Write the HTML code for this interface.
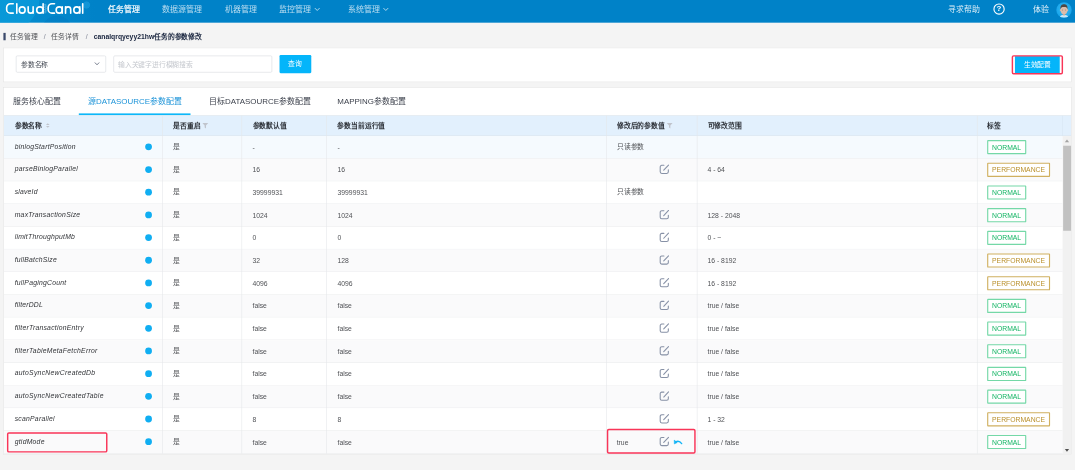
<!DOCTYPE html>
<html lang="zh-CN">
<head>
<meta charset="utf-8">
<title>CloudCanal</title>
<style>
html,body{margin:0;padding:0;background:#fff;overflow:hidden;}
body{width:1080px;height:470px;position:relative;font-family:"Liberation Sans",sans-serif;}
#page{position:absolute;left:0;top:0;width:1895.94px;height:828.92px;background:#f4f4f4;transform:scale(0.567);transform-origin:0 0;overflow:hidden;font-size:12px;color:#515a6e;filter:blur(0.55px);}
#page div,#page svg.a{position:absolute;}
#page svg{overflow:visible;display:block;}
.t{white-space:nowrap;font-size:12px;}
.n14{font-size:14px;}
</style>
</head>
<body>
<div id="page">
<div style="left:0.0px;top:0.0px;width:1895.94px;height:39.68px;background:radial-gradient(circle at 152.56px 8.82px,rgba(40,170,232,.45) 0,rgba(40,170,232,.45) 5.64px,transparent 6.88px),radial-gradient(circle at 100.53px 54.67px,rgba(0,105,180,.22) 0,rgba(0,105,180,.22) 26.46px,transparent 27.87px),radial-gradient(circle at 10.58px -3.53px,rgba(12,160,222,.6) 0,rgba(12,160,222,.6) 58.2px,transparent 59.96px),linear-gradient(90deg,#058dcf 0,#0388cc 88.18px,#0082c8 167.55px,#0082c8 100%);"></div>
<svg class="a" style="left:0;top:0" width="169.31" height="42.33" viewBox="0 0 96 24" fill="none" stroke="#fff" stroke-width="1.6" stroke-linecap="round" stroke-linejoin="round">
<path d="M13.2 3.8H10.4A3.75 3.75 0 0 0 6.65 7.55V9.4A3.75 3.75 0 0 0 10.4 13.15H13.2"/>
<path d="M16.8 3.8V13.15"/>
<ellipse cx="22.2" cy="10" rx="2.93" ry="3.15"/>
<path d="M28.17 6.85V10.65A2.48 2.48 0 0 0 33.13 10.65V6.85M33.13 6.85V13.15"/>
<ellipse cx="39.9" cy="10" rx="3.2" ry="3.15"/>
<path d="M43.1 3.8V13.15"/>
<path d="M44.95 4.3V13" stroke-width="0.9" stroke-dasharray="0.01 1.7" opacity=".7"/><path d="M45.95 5.1V12.6" stroke-width="0.9" stroke-dasharray="0.01 1.7" opacity=".6"/>
<path d="M54.5 3.8H51.95A3.75 3.75 0 0 0 48.2 7.55V9.4A3.75 3.75 0 0 0 51.95 13.15H54.5"/>
<ellipse cx="59.2" cy="10" rx="3.05" ry="3.15"/>
<path d="M62.25 6.85V13.15"/>
<path d="M65.55 13.15V6.85M65.55 9.45A2.575 2.575 0 0 1 70.7 9.45V13.15"/>
<ellipse cx="76.8" cy="10" rx="3.0" ry="3.15"/>
<path d="M79.8 6.85V13.15"/>
<path d="M82.7 3.8V13.15"/>
</svg>
<div class="t n14" style="left:190.48px;top:6.05px;line-height:20px;color:#fff;-webkit-text-stroke:0.35px #fff;">任务管理</div>
<div class="t n14" style="left:285.71px;top:6.05px;line-height:20px;color:rgba(255,255,255,.72);">数据源管理</div>
<div class="t n14" style="left:396.3px;top:6.05px;line-height:20px;color:rgba(255,255,255,.72);">机器管理</div>
<div class="t n14" style="left:491.53px;top:6.05px;line-height:20px;color:rgba(255,255,255,.72);">监控管理</div>
<div class="t n14" style="left:613.76px;top:6.05px;line-height:20px;color:rgba(255,255,255,.72);">系统管理</div>
<svg class="a" style="left:553.62px;top:12.7px" width="10.93" height="7.23" viewBox="-1 -1 6.2000000000000455 4.100000000000001" fill="none" stroke="rgba(255,255,255,.75)" stroke-width="0.9072" stroke-linecap="round" stroke-linejoin="round"><path d="M0 0L2.1000000000000227 2.1000000000000014L4.2000000000000455 0"/></svg>
<svg class="a" style="left:675.31px;top:12.7px" width="10.93" height="7.23" viewBox="-1 -1 6.2000000000000455 4.100000000000001" fill="none" stroke="rgba(255,255,255,.75)" stroke-width="0.9072" stroke-linecap="round" stroke-linejoin="round"><path d="M0 0L2.1000000000000227 2.1000000000000014L4.2000000000000455 0"/></svg>
<div class="t n14" style="left:1672.49px;top:6.05px;line-height:20px;color:rgba(255,255,255,.85);">寻求帮助</div>
<div class="a" style="left:1752.03px;top:5.82px;width:19.75px;height:19.75px;border:2px solid #fff;border-radius:50%;box-sizing:border-box;color:#fff;font-size:14px;font-weight:bold;line-height:15.75px;text-align:center;">?</div>
<div class="t n14" style="left:1821.52px;top:6.05px;line-height:20px;color:rgba(255,255,255,.9);">体验</div>
<svg class="a" style="left:1862.96px;top:3.53px" width="27.16" height="27.16" viewBox="0 0 32 32">
<defs><clipPath id="av"><circle cx="16" cy="16" r="16"/></clipPath><radialGradient id="avg" cx="50%" cy="45%" r="55%"><stop offset="0" stop-color="#3bbcf6"/><stop offset="1" stop-color="#17a4ea"/></radialGradient></defs>
<circle cx="16" cy="16" r="16" fill="url(#avg)"/>
<g clip-path="url(#av)">
<path d="M7 32C7 27.6 11 26.6 16 26.6S25 27.6 25 32Z" fill="#c6e9fb"/>
<rect x="13.4" y="21" width="5.2" height="6.2" fill="#cfa692"/>
<ellipse cx="8.7" cy="16.6" rx="1.3" ry="2.2" fill="#d8b6a4"/><ellipse cx="23.3" cy="16.6" rx="1.3" ry="2.2" fill="#d8b6a4"/>
<ellipse cx="16" cy="15.6" rx="7.1" ry="9.4" fill="#dcbdac"/>
<path d="M8.7 14.5C7.8 6.8 12 4.2 16 4.2S24.2 6.8 23.3 14.5C22.4 10.6 21 9.7 16 9.7S9.6 10.6 8.7 14.5Z" fill="#4d4744"/>
<circle cx="12.9" cy="16.2" r="0.95" fill="#7a655e"/><circle cx="19.1" cy="16.2" r="0.95" fill="#7a655e"/>
</g></svg>
<div style="left:6.08px;top:58.02px;width:3.53px;height:13.23px;background:#3b4a6b;"></div>
<div class="t" style="left:17.81px;top:54.37px;line-height:20px;color:#505256;">任务管理</div>
<div class="t" style="left:77.25px;top:54.37px;line-height:20px;color:#808695;">/</div>
<div class="t" style="left:90.83px;top:54.37px;line-height:20px;color:#505256;">任务详情</div>
<div class="t" style="left:151.32px;top:54.37px;line-height:20px;color:#808695;">/</div>
<div class="t" style="left:165.26px;top:54.37px;line-height:20px;color:#17233d;font-weight:bold;">canalqrqyeyy21hw任务的参数修改</div>
<div style="left:6.08px;top:84.13px;width:1884.39px;height:60.49px;background:#fff;border:1px solid #e3e3e3;box-sizing:border-box;"></div>
<div style="left:27.51px;top:97.71px;width:159.44px;height:30.34px;background:#fff;border:1px solid #d6dae0;border-radius:2.5px;box-sizing:border-box;"></div>
<div class="t" style="left:37.04px;top:104.29px;line-height:20px;color:#454a54;">参数名称</div>
<svg class="a" style="left:166.49px;top:109.35px" width="10.23" height="7.05" viewBox="-1 -1 5.799999999999997 4.0" fill="none" stroke="#6f7888" stroke-width="0.9638999999999999" stroke-linecap="round" stroke-linejoin="round"><path d="M0 0L1.8999999999999986 2.0L3.799999999999997 0"/></svg>
<div style="left:200.35px;top:97.71px;width:279.19px;height:30.34px;background:#fff;border:1px solid #d6dae0;border-radius:2.5px;box-sizing:border-box;"></div>
<div class="t" style="left:208.11px;top:104.29px;line-height:20px;color:#c5c8ce;">输入关键字进行模糊搜索</div>
<div style="left:492.59px;top:97.0px;width:56.26px;height:31.75px;background:#04b5fa;border-radius:2px;color:#fff;text-align:center;line-height:32.55px;">查询</div>
<div style="left:1789.77px;top:98.94px;width:79.72px;height:31.04px;background:#04b5fa;color:#fff;text-align:center;line-height:32.17px;">生效配置</div>
<svg class="a" style="left:1781.57px;top:95.24px" width="95.15" height="38.45" viewBox="-2 -2 53.95 21.8"><rect x="0" y="0" width="49.95" height="17.8" rx="1.2" fill="none" stroke="#f93558" stroke-width="1.45"/></svg>
<div style="left:6.08px;top:153.53px;width:1884.39px;height:648.06px;background:#fff;border:1px solid #e3e3e3;box-sizing:border-box;"></div>
<div class="t n14" style="left:23.1px;top:168.66px;line-height:20px;color:#3a3f4a;">服务核心配置</div>
<div class="t n14" style="left:155.38px;top:168.66px;line-height:20px;color:#1b93d8;">源DATASOURCE参数配置</div>
<div class="t n14" style="left:368.96px;top:168.66px;line-height:20px;color:#3a3f4a;">目标DATASOURCE参数配置</div>
<div class="t n14" style="left:594.89px;top:168.66px;line-height:20px;color:#3a3f4a;">MAPPING参数配置</div>
<div style="left:7.05px;top:203.09px;width:1882.45px;height:1.06px;background:#d9dde3;"></div>
<div style="left:139.33px;top:199.82px;width:197.0px;height:3.53px;background:#0db7f9;"></div>
<div style="left:7.05px;top:204.14px;width:1882.45px;height:35.54px;background:#e2f0fd;border-bottom:1px solid #dde4ea;box-sizing:border-box;"></div>
<div style="left:7.05px;top:239.68px;width:1866.49px;height:40.0px;background:#f5fafe;border-bottom:1px solid #e8eaec;box-sizing:border-box;"></div>
<div style="left:7.05px;top:279.68px;width:1866.49px;height:40.0px;background:#fafafb;border-bottom:1px solid #e8eaec;box-sizing:border-box;"></div>
<div style="left:7.05px;top:319.68px;width:1866.49px;height:40.0px;background:#fff;border-bottom:1px solid #e8eaec;box-sizing:border-box;"></div>
<div style="left:7.05px;top:359.68px;width:1866.49px;height:40.0px;background:#fafafb;border-bottom:1px solid #e8eaec;box-sizing:border-box;"></div>
<div style="left:7.05px;top:399.68px;width:1866.49px;height:40.0px;background:#fff;border-bottom:1px solid #e8eaec;box-sizing:border-box;"></div>
<div style="left:7.05px;top:439.68px;width:1866.49px;height:40.0px;background:#fafafb;border-bottom:1px solid #e8eaec;box-sizing:border-box;"></div>
<div style="left:7.05px;top:479.68px;width:1866.49px;height:40.0px;background:#fff;border-bottom:1px solid #e8eaec;box-sizing:border-box;"></div>
<div style="left:7.05px;top:519.68px;width:1866.49px;height:40.0px;background:#fafafb;border-bottom:1px solid #e8eaec;box-sizing:border-box;"></div>
<div style="left:7.05px;top:559.68px;width:1866.49px;height:40.0px;background:#fff;border-bottom:1px solid #e8eaec;box-sizing:border-box;"></div>
<div style="left:7.05px;top:599.68px;width:1866.49px;height:40.0px;background:#fafafb;border-bottom:1px solid #e8eaec;box-sizing:border-box;"></div>
<div style="left:7.05px;top:639.68px;width:1866.49px;height:40.0px;background:#fff;border-bottom:1px solid #e8eaec;box-sizing:border-box;"></div>
<div style="left:7.05px;top:679.68px;width:1866.49px;height:40.0px;background:#fafafb;border-bottom:1px solid #e8eaec;box-sizing:border-box;"></div>
<div style="left:7.05px;top:719.68px;width:1866.49px;height:40.0px;background:#fff;border-bottom:1px solid #e8eaec;box-sizing:border-box;"></div>
<div style="left:7.05px;top:759.68px;width:1866.49px;height:40.0px;background:#fafafb;border-bottom:1px solid #e8eaec;box-sizing:border-box;"></div>
<div style="left:286.1px;top:204.14px;width:0.99px;height:595.54px;background:#e4e7ea;"></div>
<div style="left:426.31px;top:204.14px;width:0.99px;height:595.54px;background:#e4e7ea;"></div>
<div style="left:574.9px;top:204.14px;width:0.99px;height:595.54px;background:#e4e7ea;"></div>
<div style="left:1068.73px;top:204.14px;width:0.99px;height:595.54px;background:#e4e7ea;"></div>
<div style="left:1228.78px;top:204.14px;width:0.99px;height:595.54px;background:#e4e7ea;"></div>
<div style="left:1723.49px;top:204.14px;width:0.99px;height:595.54px;background:#e4e7ea;"></div>
<div style="left:1873.05px;top:204.14px;width:0.99px;height:35.54px;background:#d8e6f2;"></div>
<div class="t" style="left:25.93px;top:211.16px;line-height:20px;color:#2b2f36;font-weight:bold;">参数名称</div>
<div class="t" style="left:305.64px;top:211.16px;line-height:20px;color:#2b2f36;font-weight:bold;">是否重启</div>
<div class="t" style="left:445.33px;top:211.16px;line-height:20px;color:#2b2f36;font-weight:bold;">参数默认值</div>
<div class="t" style="left:595.24px;top:211.16px;line-height:20px;color:#2b2f36;font-weight:bold;">参数当前运行值</div>
<div class="t" style="left:1088.18px;top:211.16px;line-height:20px;color:#2b2f36;font-weight:bold;">修改后的参数值</div>
<div class="t" style="left:1247.8px;top:211.16px;line-height:20px;color:#2b2f36;font-weight:bold;">可修改范围</div>
<div class="t" style="left:1741.62px;top:211.16px;line-height:20px;color:#2b2f36;font-weight:bold;">标签</div>
<svg class="a" style="left:81.31px;top:217.28px" width="6.53" height="8.64" viewBox="0 0 8 10" fill="#c0c4cc"><path d="M4 0L8 4H0Z"/><path d="M4 10L8 6H0Z"/></svg>
<svg class="a" style="left:357.14px;top:216.93px" width="10.23" height="9.52" viewBox="0 0 12 11" fill="#c0c4cc"><path d="M0 0H12L7.4 5.2V11L4.6 9V5.2Z"/></svg>
<svg class="a" style="left:1176.19px;top:216.93px" width="10.23" height="9.52" viewBox="0 0 12 11" fill="#c0c4cc"><path d="M0 0H12L7.4 5.2V11L4.6 9V5.2Z"/></svg>
<div class="t" style="left:25.93px;top:247.74px;line-height:20px;color:#303236;font-style:italic;letter-spacing:0.405px;">binlogStartPosition</div>
<div style="left:255.91px;top:252.8px;width:11.99px;height:11.99px;background:#10aef2;border-radius:50%;box-shadow:0 0 0 1px rgba(255,255,255,.8);"></div>
<div class="t" style="left:305.64px;top:249.33px;line-height:20px;color:#505256;">是</div>
<div class="t" style="left:445.33px;top:249.59px;line-height:20px;color:#505256;">-</div>
<div class="t" style="left:595.24px;top:249.59px;line-height:20px;color:#505256;">-</div>
<div class="t" style="left:1088.18px;top:249.33px;line-height:20px;color:#505256;">只读参数</div>
<div style="left:1741.09px;top:247.16px;width:68.43px;height:24.69px;border:2px solid #74d8a7;color:#12b463;background:#fff;box-sizing:border-box;border-radius:1.5px;text-align:center;line-height:23.290000000000003px;">NORMAL</div>
<div class="t" style="left:25.93px;top:287.74px;line-height:20px;color:#303236;font-style:italic;letter-spacing:0.433px;">parseBinlogParallel</div>
<div style="left:255.91px;top:292.8px;width:11.99px;height:11.99px;background:#10aef2;border-radius:50%;box-shadow:0 0 0 1px rgba(255,255,255,.8);"></div>
<div class="t" style="left:305.64px;top:289.33px;line-height:20px;color:#505256;">是</div>
<div class="t" style="left:445.33px;top:289.59px;line-height:20px;color:#505256;">16</div>
<div class="t" style="left:595.24px;top:289.59px;line-height:20px;color:#505256;">16</div>
<svg class="a" style="left:1163.49px;top:289.81px" width="17.28" height="17.28" viewBox="0 0 10 10" fill="none" stroke="#8791a6" stroke-width="1.1" stroke-linecap="round" stroke-linejoin="round"><path d="M4.6 0.9H2.4A1.6 1.6 0 0 0 0.8 2.5V7.6A1.6 1.6 0 0 0 2.4 9.2H7.5A1.6 1.6 0 0 0 9.1 7.6V5.6"/><path d="M4.4 5.9L9.3 0.7"/></svg>
<div class="t" style="left:1247.8px;top:289.59px;line-height:20px;color:#505256;">4 - 64</div>
<div style="left:1741.09px;top:287.16px;width:110.58px;height:24.69px;border:2px solid #d0b060;color:#b98f2a;background:#fff;box-sizing:border-box;border-radius:1.5px;text-align:center;line-height:23.290000000000003px;">PERFORMANCE</div>
<div class="t" style="left:25.93px;top:327.74px;line-height:20px;color:#303236;font-style:italic;letter-spacing:0.362px;">slaveId</div>
<div style="left:255.91px;top:332.8px;width:11.99px;height:11.99px;background:#10aef2;border-radius:50%;box-shadow:0 0 0 1px rgba(255,255,255,.8);"></div>
<div class="t" style="left:305.64px;top:329.33px;line-height:20px;color:#505256;">是</div>
<div class="t" style="left:445.33px;top:329.59px;line-height:20px;color:#505256;">39999931</div>
<div class="t" style="left:595.24px;top:329.59px;line-height:20px;color:#505256;">39999931</div>
<div class="t" style="left:1088.18px;top:329.33px;line-height:20px;color:#505256;">只读参数</div>
<div style="left:1741.09px;top:327.16px;width:68.43px;height:24.69px;border:2px solid #74d8a7;color:#12b463;background:#fff;box-sizing:border-box;border-radius:1.5px;text-align:center;line-height:23.290000000000003px;">NORMAL</div>
<div class="t" style="left:25.93px;top:367.74px;line-height:20px;color:#303236;font-style:italic;letter-spacing:0.447px;">maxTransactionSize</div>
<div style="left:255.91px;top:372.8px;width:11.99px;height:11.99px;background:#10aef2;border-radius:50%;box-shadow:0 0 0 1px rgba(255,255,255,.8);"></div>
<div class="t" style="left:305.64px;top:369.33px;line-height:20px;color:#505256;">是</div>
<div class="t" style="left:445.33px;top:369.59px;line-height:20px;color:#505256;">1024</div>
<div class="t" style="left:595.24px;top:369.59px;line-height:20px;color:#505256;">1024</div>
<svg class="a" style="left:1163.49px;top:369.81px" width="17.28" height="17.28" viewBox="0 0 10 10" fill="none" stroke="#8791a6" stroke-width="1.1" stroke-linecap="round" stroke-linejoin="round"><path d="M4.6 0.9H2.4A1.6 1.6 0 0 0 0.8 2.5V7.6A1.6 1.6 0 0 0 2.4 9.2H7.5A1.6 1.6 0 0 0 9.1 7.6V5.6"/><path d="M4.4 5.9L9.3 0.7"/></svg>
<div class="t" style="left:1247.8px;top:369.59px;line-height:20px;color:#505256;">128 - 2048</div>
<div style="left:1741.09px;top:367.16px;width:68.43px;height:24.69px;border:2px solid #74d8a7;color:#12b463;background:#fff;box-sizing:border-box;border-radius:1.5px;text-align:center;line-height:23.290000000000003px;">NORMAL</div>
<div class="t" style="left:25.93px;top:407.74px;line-height:20px;color:#303236;font-style:italic;letter-spacing:0.421px;">limitThroughputMb</div>
<div style="left:255.91px;top:412.8px;width:11.99px;height:11.99px;background:#10aef2;border-radius:50%;box-shadow:0 0 0 1px rgba(255,255,255,.8);"></div>
<div class="t" style="left:305.64px;top:409.33px;line-height:20px;color:#505256;">是</div>
<div class="t" style="left:445.33px;top:409.59px;line-height:20px;color:#505256;">0</div>
<div class="t" style="left:595.24px;top:409.59px;line-height:20px;color:#505256;">0</div>
<svg class="a" style="left:1163.49px;top:409.81px" width="17.28" height="17.28" viewBox="0 0 10 10" fill="none" stroke="#8791a6" stroke-width="1.1" stroke-linecap="round" stroke-linejoin="round"><path d="M4.6 0.9H2.4A1.6 1.6 0 0 0 0.8 2.5V7.6A1.6 1.6 0 0 0 2.4 9.2H7.5A1.6 1.6 0 0 0 9.1 7.6V5.6"/><path d="M4.4 5.9L9.3 0.7"/></svg>
<div class="t" style="left:1247.8px;top:409.59px;line-height:20px;color:#505256;">0 - ~</div>
<div style="left:1741.09px;top:407.16px;width:68.43px;height:24.69px;border:2px solid #74d8a7;color:#12b463;background:#fff;box-sizing:border-box;border-radius:1.5px;text-align:center;line-height:23.290000000000003px;">NORMAL</div>
<div class="t" style="left:25.93px;top:447.74px;line-height:20px;color:#303236;font-style:italic;letter-spacing:0.402px;">fullBatchSize</div>
<div style="left:255.91px;top:452.8px;width:11.99px;height:11.99px;background:#10aef2;border-radius:50%;box-shadow:0 0 0 1px rgba(255,255,255,.8);"></div>
<div class="t" style="left:305.64px;top:449.33px;line-height:20px;color:#505256;">是</div>
<div class="t" style="left:445.33px;top:449.59px;line-height:20px;color:#505256;">32</div>
<div class="t" style="left:595.24px;top:449.59px;line-height:20px;color:#505256;">128</div>
<svg class="a" style="left:1163.49px;top:449.81px" width="17.28" height="17.28" viewBox="0 0 10 10" fill="none" stroke="#8791a6" stroke-width="1.1" stroke-linecap="round" stroke-linejoin="round"><path d="M4.6 0.9H2.4A1.6 1.6 0 0 0 0.8 2.5V7.6A1.6 1.6 0 0 0 2.4 9.2H7.5A1.6 1.6 0 0 0 9.1 7.6V5.6"/><path d="M4.4 5.9L9.3 0.7"/></svg>
<div class="t" style="left:1247.8px;top:449.59px;line-height:20px;color:#505256;">16 - 8192</div>
<div style="left:1741.09px;top:447.16px;width:110.58px;height:24.69px;border:2px solid #d0b060;color:#b98f2a;background:#fff;box-sizing:border-box;border-radius:1.5px;text-align:center;line-height:23.290000000000003px;">PERFORMANCE</div>
<div class="t" style="left:25.93px;top:487.74px;line-height:20px;color:#303236;font-style:italic;letter-spacing:0.43px;">fullPagingCount</div>
<div style="left:255.91px;top:492.8px;width:11.99px;height:11.99px;background:#10aef2;border-radius:50%;box-shadow:0 0 0 1px rgba(255,255,255,.8);"></div>
<div class="t" style="left:305.64px;top:489.33px;line-height:20px;color:#505256;">是</div>
<div class="t" style="left:445.33px;top:489.59px;line-height:20px;color:#505256;">4096</div>
<div class="t" style="left:595.24px;top:489.59px;line-height:20px;color:#505256;">4096</div>
<svg class="a" style="left:1163.49px;top:489.81px" width="17.28" height="17.28" viewBox="0 0 10 10" fill="none" stroke="#8791a6" stroke-width="1.1" stroke-linecap="round" stroke-linejoin="round"><path d="M4.6 0.9H2.4A1.6 1.6 0 0 0 0.8 2.5V7.6A1.6 1.6 0 0 0 2.4 9.2H7.5A1.6 1.6 0 0 0 9.1 7.6V5.6"/><path d="M4.4 5.9L9.3 0.7"/></svg>
<div class="t" style="left:1247.8px;top:489.59px;line-height:20px;color:#505256;">16 - 8192</div>
<div style="left:1741.09px;top:487.16px;width:110.58px;height:24.69px;border:2px solid #d0b060;color:#b98f2a;background:#fff;box-sizing:border-box;border-radius:1.5px;text-align:center;line-height:23.290000000000003px;">PERFORMANCE</div>
<div class="t" style="left:25.93px;top:527.74px;line-height:20px;color:#303236;font-style:italic;letter-spacing:0.339px;">filterDDL</div>
<div style="left:255.91px;top:532.8px;width:11.99px;height:11.99px;background:#10aef2;border-radius:50%;box-shadow:0 0 0 1px rgba(255,255,255,.8);"></div>
<div class="t" style="left:305.64px;top:529.33px;line-height:20px;color:#505256;">是</div>
<div class="t" style="left:445.33px;top:529.59px;line-height:20px;color:#505256;">false</div>
<div class="t" style="left:595.24px;top:529.59px;line-height:20px;color:#505256;">false</div>
<svg class="a" style="left:1163.49px;top:529.81px" width="17.28" height="17.28" viewBox="0 0 10 10" fill="none" stroke="#8791a6" stroke-width="1.1" stroke-linecap="round" stroke-linejoin="round"><path d="M4.6 0.9H2.4A1.6 1.6 0 0 0 0.8 2.5V7.6A1.6 1.6 0 0 0 2.4 9.2H7.5A1.6 1.6 0 0 0 9.1 7.6V5.6"/><path d="M4.4 5.9L9.3 0.7"/></svg>
<div class="t" style="left:1247.8px;top:529.59px;line-height:20px;color:#505256;">true / false</div>
<div style="left:1741.09px;top:527.16px;width:68.43px;height:24.69px;border:2px solid #74d8a7;color:#12b463;background:#fff;box-sizing:border-box;border-radius:1.5px;text-align:center;line-height:23.290000000000003px;">NORMAL</div>
<div class="t" style="left:25.93px;top:567.74px;line-height:20px;color:#303236;font-style:italic;letter-spacing:0.427px;">filterTransactionEntry</div>
<div style="left:255.91px;top:572.8px;width:11.99px;height:11.99px;background:#10aef2;border-radius:50%;box-shadow:0 0 0 1px rgba(255,255,255,.8);"></div>
<div class="t" style="left:305.64px;top:569.33px;line-height:20px;color:#505256;">是</div>
<div class="t" style="left:445.33px;top:569.59px;line-height:20px;color:#505256;">false</div>
<div class="t" style="left:595.24px;top:569.59px;line-height:20px;color:#505256;">false</div>
<svg class="a" style="left:1163.49px;top:569.81px" width="17.28" height="17.28" viewBox="0 0 10 10" fill="none" stroke="#8791a6" stroke-width="1.1" stroke-linecap="round" stroke-linejoin="round"><path d="M4.6 0.9H2.4A1.6 1.6 0 0 0 0.8 2.5V7.6A1.6 1.6 0 0 0 2.4 9.2H7.5A1.6 1.6 0 0 0 9.1 7.6V5.6"/><path d="M4.4 5.9L9.3 0.7"/></svg>
<div class="t" style="left:1247.8px;top:569.59px;line-height:20px;color:#505256;">true / false</div>
<div style="left:1741.09px;top:567.16px;width:68.43px;height:24.69px;border:2px solid #74d8a7;color:#12b463;background:#fff;box-sizing:border-box;border-radius:1.5px;text-align:center;line-height:23.290000000000003px;">NORMAL</div>
<div class="t" style="left:25.93px;top:607.74px;line-height:20px;color:#303236;font-style:italic;letter-spacing:0.443px;">filterTableMetaFetchError</div>
<div style="left:255.91px;top:612.8px;width:11.99px;height:11.99px;background:#10aef2;border-radius:50%;box-shadow:0 0 0 1px rgba(255,255,255,.8);"></div>
<div class="t" style="left:305.64px;top:609.33px;line-height:20px;color:#505256;">是</div>
<div class="t" style="left:445.33px;top:609.59px;line-height:20px;color:#505256;">false</div>
<div class="t" style="left:595.24px;top:609.59px;line-height:20px;color:#505256;">false</div>
<svg class="a" style="left:1163.49px;top:609.81px" width="17.28" height="17.28" viewBox="0 0 10 10" fill="none" stroke="#8791a6" stroke-width="1.1" stroke-linecap="round" stroke-linejoin="round"><path d="M4.6 0.9H2.4A1.6 1.6 0 0 0 0.8 2.5V7.6A1.6 1.6 0 0 0 2.4 9.2H7.5A1.6 1.6 0 0 0 9.1 7.6V5.6"/><path d="M4.4 5.9L9.3 0.7"/></svg>
<div class="t" style="left:1247.8px;top:609.59px;line-height:20px;color:#505256;">true / false</div>
<div style="left:1741.09px;top:607.16px;width:68.43px;height:24.69px;border:2px solid #74d8a7;color:#12b463;background:#fff;box-sizing:border-box;border-radius:1.5px;text-align:center;line-height:23.290000000000003px;">NORMAL</div>
<div class="t" style="left:25.93px;top:647.74px;line-height:20px;color:#303236;font-style:italic;letter-spacing:0.504px;">autoSyncNewCreatedDb</div>
<div style="left:255.91px;top:652.8px;width:11.99px;height:11.99px;background:#10aef2;border-radius:50%;box-shadow:0 0 0 1px rgba(255,255,255,.8);"></div>
<div class="t" style="left:305.64px;top:649.33px;line-height:20px;color:#505256;">是</div>
<div class="t" style="left:445.33px;top:649.59px;line-height:20px;color:#505256;">false</div>
<div class="t" style="left:595.24px;top:649.59px;line-height:20px;color:#505256;">false</div>
<svg class="a" style="left:1163.49px;top:649.81px" width="17.28" height="17.28" viewBox="0 0 10 10" fill="none" stroke="#8791a6" stroke-width="1.1" stroke-linecap="round" stroke-linejoin="round"><path d="M4.6 0.9H2.4A1.6 1.6 0 0 0 0.8 2.5V7.6A1.6 1.6 0 0 0 2.4 9.2H7.5A1.6 1.6 0 0 0 9.1 7.6V5.6"/><path d="M4.4 5.9L9.3 0.7"/></svg>
<div class="t" style="left:1247.8px;top:649.59px;line-height:20px;color:#505256;">true / false</div>
<div style="left:1741.09px;top:647.16px;width:68.43px;height:24.69px;border:2px solid #74d8a7;color:#12b463;background:#fff;box-sizing:border-box;border-radius:1.5px;text-align:center;line-height:23.290000000000003px;">NORMAL</div>
<div class="t" style="left:25.93px;top:687.74px;line-height:20px;color:#303236;font-style:italic;letter-spacing:0.492px;">autoSyncNewCreatedTable</div>
<div style="left:255.91px;top:692.8px;width:11.99px;height:11.99px;background:#10aef2;border-radius:50%;box-shadow:0 0 0 1px rgba(255,255,255,.8);"></div>
<div class="t" style="left:305.64px;top:689.33px;line-height:20px;color:#505256;">是</div>
<div class="t" style="left:445.33px;top:689.59px;line-height:20px;color:#505256;">false</div>
<div class="t" style="left:595.24px;top:689.59px;line-height:20px;color:#505256;">false</div>
<svg class="a" style="left:1163.49px;top:689.81px" width="17.28" height="17.28" viewBox="0 0 10 10" fill="none" stroke="#8791a6" stroke-width="1.1" stroke-linecap="round" stroke-linejoin="round"><path d="M4.6 0.9H2.4A1.6 1.6 0 0 0 0.8 2.5V7.6A1.6 1.6 0 0 0 2.4 9.2H7.5A1.6 1.6 0 0 0 9.1 7.6V5.6"/><path d="M4.4 5.9L9.3 0.7"/></svg>
<div class="t" style="left:1247.8px;top:689.59px;line-height:20px;color:#505256;">true / false</div>
<div style="left:1741.09px;top:687.16px;width:68.43px;height:24.69px;border:2px solid #74d8a7;color:#12b463;background:#fff;box-sizing:border-box;border-radius:1.5px;text-align:center;line-height:23.290000000000003px;">NORMAL</div>
<div class="t" style="left:25.93px;top:728.27px;line-height:20px;color:#303236;font-style:italic;letter-spacing:0.446px;">scanParallel</div>
<div style="left:255.91px;top:732.8px;width:11.99px;height:11.99px;background:#10aef2;border-radius:50%;box-shadow:0 0 0 1px rgba(255,255,255,.8);"></div>
<div class="t" style="left:305.64px;top:729.33px;line-height:20px;color:#505256;">是</div>
<div class="t" style="left:445.33px;top:729.59px;line-height:20px;color:#505256;">8</div>
<div class="t" style="left:595.24px;top:729.59px;line-height:20px;color:#505256;">8</div>
<svg class="a" style="left:1163.49px;top:729.81px" width="17.28" height="17.28" viewBox="0 0 10 10" fill="none" stroke="#8791a6" stroke-width="1.1" stroke-linecap="round" stroke-linejoin="round"><path d="M4.6 0.9H2.4A1.6 1.6 0 0 0 0.8 2.5V7.6A1.6 1.6 0 0 0 2.4 9.2H7.5A1.6 1.6 0 0 0 9.1 7.6V5.6"/><path d="M4.4 5.9L9.3 0.7"/></svg>
<div class="t" style="left:1247.8px;top:729.59px;line-height:20px;color:#505256;">1 - 32</div>
<div style="left:1741.09px;top:727.16px;width:110.58px;height:24.69px;border:2px solid #d0b060;color:#b98f2a;background:#fff;box-sizing:border-box;border-radius:1.5px;text-align:center;line-height:23.290000000000003px;">PERFORMANCE</div>
<div class="t" style="left:25.93px;top:768.8px;line-height:20px;color:#303236;font-style:italic;letter-spacing:0.442px;">gtidMode</div>
<div style="left:255.91px;top:772.8px;width:11.99px;height:11.99px;background:#10aef2;border-radius:50%;box-shadow:0 0 0 1px rgba(255,255,255,.8);"></div>
<div class="t" style="left:305.64px;top:769.33px;line-height:20px;color:#505256;">是</div>
<div class="t" style="left:445.33px;top:769.59px;line-height:20px;color:#505256;">false</div>
<div class="t" style="left:595.24px;top:769.59px;line-height:20px;color:#505256;">false</div>
<svg class="a" style="left:1163.49px;top:769.81px" width="17.28" height="17.28" viewBox="0 0 10 10" fill="none" stroke="#8791a6" stroke-width="1.1" stroke-linecap="round" stroke-linejoin="round"><path d="M4.6 0.9H2.4A1.6 1.6 0 0 0 0.8 2.5V7.6A1.6 1.6 0 0 0 2.4 9.2H7.5A1.6 1.6 0 0 0 9.1 7.6V5.6"/><path d="M4.4 5.9L9.3 0.7"/></svg>
<div class="t" style="left:1087.65px;top:769.59px;line-height:20px;color:#505256;">true</div>
<svg class="a" style="left:1188.89px;top:775.98px" width="14.29" height="7.94" viewBox="0 0 8.6 4.8"><path d="M0 0.1L0.15 4.3L3.3 2.7Z" fill="#12b4f7" stroke="#12b4f7" stroke-width="0.5" stroke-linejoin="round"/><path d="M1.6 1.9Q5.4 0.0 8.0 3.9" fill="none" stroke="#12b4f7" stroke-width="1.45" stroke-linecap="round"/></svg>
<div class="t" style="left:1247.8px;top:769.59px;line-height:20px;color:#505256;">true / false</div>
<div style="left:1741.09px;top:767.16px;width:68.43px;height:24.69px;border:2px solid #74d8a7;color:#12b463;background:#fff;box-sizing:border-box;border-radius:1.5px;text-align:center;line-height:23.290000000000003px;">NORMAL</div>
<div style="left:1873.54px;top:239.68px;width:15.96px;height:560.85px;background:#f1f1f1;"></div>
<div style="left:1875.31px;top:257.14px;width:13.58px;height:149.91px;background:#c1c1c1;"></div>
<svg class="a" style="left:1878.13px;top:245.86px" width="7.58" height="4.76" viewBox="0 0 8 5" fill="#a3a3a3"><path d="M4 0L8 5H0Z"/></svg>
<svg class="a" style="left:1877.95px;top:791.89px" width="7.58" height="4.94" viewBox="0 0 8 5" fill="#505050"><path d="M4 5L8 0H0Z"/></svg>
<svg class="a" style="left:10.23px;top:760.14px" width="181.83" height="40.48" viewBox="-2 -2 103.1 22.95"><rect x="0" y="0" width="99.1" height="18.95" rx="1.2" fill="none" stroke="#f93558" stroke-width="1.45"/></svg>
<svg class="a" style="left:1068.34px;top:753.79px" width="161.2" height="48.41" viewBox="-2 -2 91.4 27.45"><rect x="0" y="0" width="87.4" height="23.45" rx="1.2" fill="none" stroke="#f93558" stroke-width="1.45"/></svg>
</div>
</body>
</html>
